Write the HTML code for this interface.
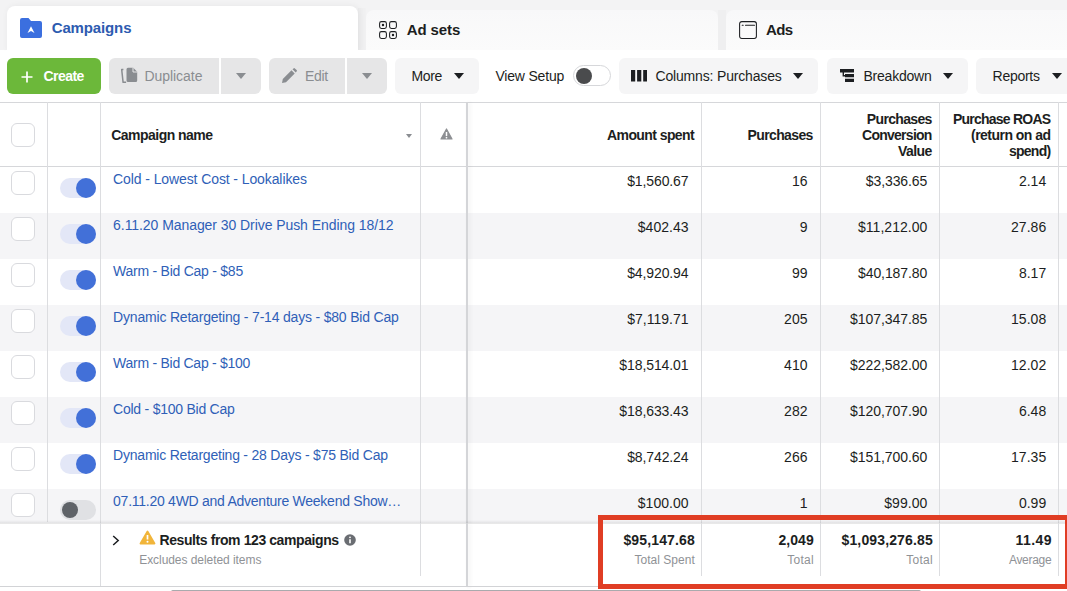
<!DOCTYPE html>
<html><head><meta charset="utf-8"><title>Campaigns</title>
<style>
*{box-sizing:border-box;margin:0;padding:0}
html,body{width:1067px;height:591px;overflow:hidden;background:#fff}
body{font-family:"Liberation Sans",Arial,sans-serif;font-size:14px;color:#1c1e21;position:relative}
.abs{position:absolute}
.t{position:absolute;white-space:nowrap;line-height:20px;z-index:5}
#tabs{position:absolute;left:0;top:0;width:1067px;height:50px;background:#f3f3f4}
.tab{position:absolute;top:10px;height:40px;background:linear-gradient(#f8f8f9,#fbfbfb);border-radius:8px 8px 0 0}
.tab.act{background:#fff;top:6px;height:46px;box-shadow:1px 0 6px rgba(0,0,0,.06)}
#bar{position:absolute;left:0;top:50px;width:1067px;height:52px;background:#fff;border-radius:8px 0 0 0}
.btn{position:absolute;top:58px;height:36px;border-radius:6px;background:#f5f5f6}
.btn.dis{background:#e6e6e7}
.btn.grn{background:#6cb83a}
.caret{position:absolute;width:0;height:0;border-left:5.700px solid transparent;border-right:5.700px solid transparent;border-top:6.200px solid #1c1e21}
.dis .caret{border-top-color:#8a8d91}
#tbl{position:absolute;left:0;top:102px;width:1067px;height:489px;background:#fff}
.hl{position:absolute;left:0;width:1067px;height:1px;background:#d6d7da}
.vl{position:absolute;width:1px;background:#dcdde0}
.vl.fz{width:2px;background:#d4d5d8;box-shadow:2px 0 4px rgba(0,0,0,.07)}
.row{position:absolute;left:0;width:1067px;height:46px;background:#fff}
.row.alt{background:#f5f5f7}
.cb{position:absolute;left:11px;width:24px;height:24px;border:1px solid #d9dade;border-radius:6px;background:#fff}
.row .cb{top:4px}
.tg{position:absolute;left:60px;top:11px;width:36px;height:20px;border-radius:10px;background:#e3e7f7}
.tg i{position:absolute;top:0;right:0;width:20px;height:20px;border-radius:50%;background:#4270d8}
.tg.off{background:#e0e1e4}
.tg.off i{right:auto;left:1.700px;top:2px;width:16px;height:16px;background:#5f6368}
#foot{position:absolute;left:0;top:522.500px;width:1067px;height:64.500px;background:#fff}
</style></head><body>

<div id="tabs">
  <div class="abs" style="left:358px;top:8px;width:8px;height:42px;background:linear-gradient(90deg,#ededee,#f1f1f2)"></div>
  <div class="abs" style="left:718px;top:10px;width:8px;height:40px;background:#efeff0"></div>
  <div class="tab act" style="left:7px;width:351px">
    <svg class="abs" style="left:13px;top:12px" width="22" height="20" viewBox="0 0 22 20"><path d="M0 2a2 2 0 0 1 2-2h6.500l2.500 3H20a2 2 0 0 1 2 2v13a2 2 0 0 1-2 2H2a2 2 0 0 1-2-2z" fill="#3b6fdf"/><path d="M11 8.300l3.500 6.800-3.500-2.100-3.500 2.100z" fill="#fff"/></svg>
  </div>
  <div class="tab" style="left:366px;width:352px">
    <svg class="abs" style="left:13px;top:11px" width="18" height="18" viewBox="0 0 18 18" fill="none" stroke="#1c1e21" stroke-width="1.050"><rect x=".6" y=".6" width="6.800" height="6.800" rx="1.800"/><rect x="10.600" y=".6" width="6.800" height="6.800" rx="1.800"/><rect x=".6" y="10.600" width="6.800" height="6.800" rx="1.800"/><rect x="10.600" y="10.600" width="6.800" height="6.800" rx="1.800"/><circle cx="4" cy="4" r=".7" fill="#1c1e21"/><circle cx="14" cy="14" r=".7" fill="#1c1e21"/></svg>
  </div>
  <div class="tab" style="left:726px;width:360px">
    <svg class="abs" style="left:13px;top:11px" width="18" height="18" viewBox="0 0 18 18" fill="none" stroke="#1c1e21" stroke-width="1.050"><rect x=".6" y=".6" width="16.800" height="16.800" rx="2.200"/><path d="M3.200 4.300h1M6.500 4.300h9" stroke-linecap="round"/></svg>
  </div>
</div>

<div id="bar"></div>
<div class="btn grn" style="left:7px;width:94px"><svg class="abs" style="left:14px;top:12.500px" width="12" height="12" viewBox="0 0 12 12"><path d="M6 .5v11M.5 6h11" stroke="#fff" stroke-width="1.700" fill="none"/></svg></div>
<div class="btn dis" style="left:109px;width:110px;border-radius:6px 0 0 6px"><svg class="abs" style="left:10.900px;top:9px" width="18" height="17" viewBox="0 0 18 17"><path d="M8 .8h5.200l4 4V13.500a1.500 1.500 0 0 1-1.500 1.500H8A1.500 1.500 0 0 1 6.500 13.500V2.300A1.500 1.500 0 0 1 8 .800z" fill="#8a8d91"/><path d="M13 .6v4.400h4.400" fill="none" stroke="#e6e6e7" stroke-width="1"/><path d="M3.400 2.600H1.700L3.100 15.300h3" stroke="#8a8d91" stroke-width="1.500" fill="none" stroke-linejoin="round"/></svg></div>
<div class="btn dis" style="left:221px;width:40px;border-radius:0 6px 6px 0"><i class="caret" style="left:14.500px;top:15px"></i></div>
<div class="btn dis" style="left:269px;width:76px;border-radius:6px 0 0 6px"><svg class="abs" style="left:12.300px;top:9.800px" width="16" height="16" viewBox="0 0 16 16"><path d="M1 15l.8-4L10.500 2.300l3.200 3.200L5 14.200zM11.500 1.300l1-.9a1 1 0 0 1 1.400 0l1.700 1.700a1 1 0 0 1 0 1.400l-.9 1z" fill="#8a8d91"/></svg></div>
<div class="btn dis" style="left:347px;width:40px;border-radius:0 6px 6px 0"><i class="caret" style="left:14.500px;top:15px"></i></div>
<div class="btn" style="left:395px;width:84px"><i class="caret" style="left:58.700px;top:15px"></i></div>
<div class="abs" style="left:573px;top:65px;width:38px;height:21px;border-radius:11px;border:1px solid #d6d7da;background:#fff"><div class="abs" style="left:2px;top:1.500px;width:16.400px;height:16.400px;border-radius:50%;background:#4a4b4d"></div></div>
<div class="btn" style="left:619px;width:199px"><svg class="abs" style="left:12px;top:12.300px" width="16.400" height="11.500" viewBox="0 0 16.400 11.500"><path d="M0 0h4.200v11.500H0zM6.100 0h4.200v11.500H6.100zM12.200 0h4.200v11.500h-4.200z" fill="#1c1e21"/></svg><i class="caret" style="left:174.300px;top:15px"></i></div>
<div class="btn" style="left:827px;width:141px"><svg class="abs" style="left:13px;top:11.300px" width="14" height="13.200" viewBox="0 0 14 13.200"><path d="M0 0h14v3.400H0zM5 4.900h9v3.400H5zM5 9.800h9v3.400H5zM2.600 3.400h1.400v2.600h1v1.400H2.600z" fill="#1c1e21"/></svg><i class="caret" style="left:116.200px;top:15px"></i></div>
<div class="btn" style="left:976px;width:120px"><i class="caret" style="left:75.600px;top:15px"></i></div>

<div id="tbl"></div>
<!-- header -->
<div class="hl" style="top:102px"></div>
<span class="cb" style="top:123px"></span>
<i class="caret" style="left:405.700px;top:134px;border-left-width:3.300px;border-right-width:3.300px;border-top-width:4px;border-top-color:#8a8d91"></i>
<svg class="abs" style="left:439.500px;top:127.500px" width="13" height="12" viewBox="0 0 13 12"><path d="M6.500 1L12 11H1z" fill="#8d8f93" stroke="#8d8f93" stroke-width="1.200" stroke-linejoin="round"/><path d="M6.500 4v4" stroke="#fff" stroke-width="1.500"/><circle cx="6.500" cy="9.700" r=".85" fill="#fff"/></svg>
<div class="hl" style="top:166px"></div>

<div class="row" style="top:167px"><span class="cb"></span><span class="tg on"><i></i></span></div>
<div class="row alt" style="top:213px"><span class="cb"></span><span class="tg on"><i></i></span></div>
<div class="row" style="top:259px"><span class="cb"></span><span class="tg on"><i></i></span></div>
<div class="row alt" style="top:305px"><span class="cb"></span><span class="tg on"><i></i></span></div>
<div class="row" style="top:351px"><span class="cb"></span><span class="tg on"><i></i></span></div>
<div class="row alt" style="top:397px"><span class="cb"></span><span class="tg on"><i></i></span></div>
<div class="row" style="top:443px"><span class="cb"></span><span class="tg on"><i></i></span></div>
<div class="row alt" style="top:489px"><span class="cb"></span><span class="tg off"><i></i></span></div>

<!-- vertical lines -->
<div class="vl" style="left:47px;top:102px;height:420px"></div>
<div class="vl" style="left:100px;top:102px;height:485px"></div>
<div class="vl" style="left:420px;top:102px;height:474px"></div>
<div class="vl fz" style="left:465.500px;top:102px;height:485px"></div>
<div class="vl" style="left:701px;top:102px;height:474px"></div>
<div class="vl" style="left:820px;top:102px;height:474px"></div>
<div class="vl" style="left:939px;top:102px;height:474px"></div>
<div class="vl" style="left:1058px;top:102px;height:474px"></div>

<!-- footer -->
<div id="foot">
  <div class="abs" style="left:0;top:-3px;width:1067px;height:4.500px;background:linear-gradient(rgba(0,0,0,0),rgba(0,0,0,.10))"></div>
  <svg class="abs" style="left:112.300px;top:12.500px" width="8" height="11" viewBox="0 0 8 11"><path d="M1.200 1l5 4.500-5 4.500" stroke="#1c1e21" stroke-width="1.500" fill="none"/></svg>
  <svg class="abs" style="left:138.500px;top:7px" width="17" height="15" viewBox="0 0 17 15"><path d="M8.500 1.500L15.500 13.500H1.500z" fill="#f1b53a" stroke="#f1b53a" stroke-width="1.800" stroke-linejoin="round"/><path d="M8.500 5v4.500" stroke="#fff" stroke-width="1.700"/><circle cx="8.500" cy="11.700" r="1" fill="#fff"/></svg>
  <svg class="abs" style="left:344.200px;top:11.700px" width="12" height="12" viewBox="0 0 12 12"><circle cx="6" cy="6" r="5.800" fill="#6a6d72"/><path d="M6 5.200v4" stroke="#fff" stroke-width="1.600"/><circle cx="6" cy="3.300" r=".9" fill="#fff"/></svg>
</div>
<div class="vl" style="left:100px;top:523px;height:64px"></div>
<div class="vl" style="left:420px;top:523px;height:53px"></div>
<div class="vl fz" style="left:465.500px;top:523px;height:64px"></div>
<div class="vl" style="left:701px;top:523px;height:53px"></div>
<div class="vl" style="left:820px;top:523px;height:53px"></div>
<div class="vl" style="left:939px;top:523px;height:53px"></div>
<div class="vl" style="left:1058px;top:523px;height:53px"></div>
<div class="hl" style="top:586px;background:#d2d3d6"></div>
<div class="abs" style="left:170.500px;top:589.600px;width:750px;height:4px;background:#a9aaad;border-radius:2px"></div>
<span class="t" style="left:51.70px;top:17.90px;font-size:15px;font-weight:bold;color:#2d5bb0;letter-spacing:-0.132px">Campaigns</span>
<span class="t" style="left:406.80px;top:19.50px;font-size:15px;font-weight:bold;color:#1c1e21;letter-spacing:-0.115px">Ad sets</span>
<span class="t" style="left:766.00px;top:19.50px;font-size:15px;font-weight:bold;color:#1c1e21;letter-spacing:-0.572px">Ads</span>
<span class="t" style="left:43.50px;top:66.15px;font-size:14px;font-weight:bold;color:#fff;letter-spacing:-0.559px">Create</span>
<span class="t" style="left:144.40px;top:66.15px;font-size:14px;font-weight:normal;color:#8a8d91;letter-spacing:-0.034px">Duplicate</span>
<span class="t" style="left:305.00px;top:66.15px;font-size:14px;font-weight:normal;color:#8a8d91;letter-spacing:-0.308px">Edit</span>
<span class="t" style="left:411.40px;top:66.15px;font-size:14px;font-weight:normal;color:#1c1e21;letter-spacing:-0.335px">More</span>
<span class="t" style="left:495.40px;top:66.15px;font-size:14px;font-weight:normal;color:#1c1e21;letter-spacing:-0.186px">View Setup</span>
<span class="t" style="left:655.50px;top:66.15px;font-size:14px;font-weight:normal;color:#1c1e21;letter-spacing:-0.169px">Columns: Purchases</span>
<span class="t" style="left:863.50px;top:66.15px;font-size:14px;font-weight:normal;color:#1c1e21;letter-spacing:-0.231px">Breakdown</span>
<span class="t" style="left:992.60px;top:66.15px;font-size:14px;font-weight:normal;color:#1c1e21;letter-spacing:-0.272px">Reports</span>
<span class="t" style="left:111.30px;top:125.45px;font-size:14px;font-weight:bold;color:#1c1e21;letter-spacing:-0.537px">Campaign name</span>
<span class="t" style="left:607.00px;top:125.45px;font-size:14px;font-weight:bold;color:#1c1e21;letter-spacing:-0.583px">Amount spent</span>
<span class="t" style="left:747.50px;top:125.45px;font-size:14px;font-weight:bold;color:#1c1e21;letter-spacing:-0.616px">Purchases</span>
<span class="t" style="left:866.80px;top:109.05px;font-size:14px;font-weight:bold;color:#1c1e21;letter-spacing:-0.654px">Purchases</span>
<span class="t" style="left:862.00px;top:125.25px;font-size:14px;font-weight:bold;color:#1c1e21;letter-spacing:-0.735px">Conversion</span>
<span class="t" style="left:898.00px;top:141.45px;font-size:14px;font-weight:bold;color:#1c1e21;letter-spacing:-0.548px">Value</span>
<span class="t" style="left:953.00px;top:109.05px;font-size:14px;font-weight:bold;color:#1c1e21;letter-spacing:-0.773px">Purchase ROAS</span>
<span class="t" style="left:971.00px;top:125.25px;font-size:14px;font-weight:bold;color:#1c1e21;letter-spacing:-0.520px">(return on ad</span>
<span class="t" style="left:1009.00px;top:141.45px;font-size:14px;font-weight:bold;color:#1c1e21;letter-spacing:-0.758px">spend)</span>
<span class="t" style="left:113.10px;top:168.95px;font-size:14px;font-weight:normal;color:#2f5fb7;letter-spacing:-0.099px">Cold - Lowest Cost - Lookalikes</span>
<span class="t" style="left:627.13px;top:170.85px;font-size:14px;font-weight:normal;color:#1c1e21;letter-spacing:-0.103px">$1,560.67</span>
<span class="t" style="left:791.88px;top:170.85px;font-size:14px;font-weight:normal;color:#1c1e21;letter-spacing:0.142px">16</span>
<span class="t" style="left:865.83px;top:170.85px;font-size:14px;font-weight:normal;color:#1c1e21;letter-spacing:-0.103px">$3,336.65</span>
<span class="t" style="left:1018.92px;top:170.85px;font-size:14px;font-weight:normal;color:#1c1e21;letter-spacing:0.010px">2.14</span>
<span class="t" style="left:113.10px;top:214.95px;font-size:14px;font-weight:normal;color:#2f5fb7;letter-spacing:-0.065px">6.11.20 Manager 30 Drive Push Ending 18/12</span>
<span class="t" style="left:637.74px;top:216.85px;font-size:14px;font-weight:normal;color:#1c1e21;letter-spacing:0.042px">$402.43</span>
<span class="t" style="left:799.74px;top:216.85px;font-size:14px;font-weight:normal;color:#1c1e21;letter-spacing:0.063px">9</span>
<span class="t" style="left:857.97px;top:216.85px;font-size:14px;font-weight:normal;color:#1c1e21;letter-spacing:0.033px">$11,212.00</span>
<span class="t" style="left:1011.06px;top:216.85px;font-size:14px;font-weight:normal;color:#1c1e21;letter-spacing:0.023px">27.86</span>
<span class="t" style="left:113.10px;top:260.95px;font-size:14px;font-weight:normal;color:#2f5fb7;letter-spacing:-0.250px">Warm - Bid Cap - $85</span>
<span class="t" style="left:627.13px;top:262.85px;font-size:14px;font-weight:normal;color:#1c1e21;letter-spacing:-0.103px">$4,920.94</span>
<span class="t" style="left:791.88px;top:262.85px;font-size:14px;font-weight:normal;color:#1c1e21;letter-spacing:0.142px">99</span>
<span class="t" style="left:857.97px;top:262.85px;font-size:14px;font-weight:normal;color:#1c1e21;letter-spacing:-0.083px">$40,187.80</span>
<span class="t" style="left:1018.92px;top:262.85px;font-size:14px;font-weight:normal;color:#1c1e21;letter-spacing:0.010px">8.17</span>
<span class="t" style="left:113.10px;top:306.95px;font-size:14px;font-weight:normal;color:#2f5fb7;letter-spacing:-0.192px">Dynamic Retargeting - 7-14 days - $80 Bid Cap</span>
<span class="t" style="left:627.13px;top:308.85px;font-size:14px;font-weight:normal;color:#1c1e21;letter-spacing:0.028px">$7,119.71</span>
<span class="t" style="left:784.02px;top:308.85px;font-size:14px;font-weight:normal;color:#1c1e21;letter-spacing:0.110px">205</span>
<span class="t" style="left:850.11px;top:308.85px;font-size:14px;font-weight:normal;color:#1c1e21;letter-spacing:-0.067px">$107,347.85</span>
<span class="t" style="left:1011.06px;top:308.85px;font-size:14px;font-weight:normal;color:#1c1e21;letter-spacing:0.023px">15.08</span>
<span class="t" style="left:113.10px;top:352.95px;font-size:14px;font-weight:normal;color:#2f5fb7;letter-spacing:-0.267px">Warm - Bid Cap - $100</span>
<span class="t" style="left:619.27px;top:354.85px;font-size:14px;font-weight:normal;color:#1c1e21;letter-spacing:-0.083px">$18,514.01</span>
<span class="t" style="left:784.02px;top:354.85px;font-size:14px;font-weight:normal;color:#1c1e21;letter-spacing:0.110px">410</span>
<span class="t" style="left:850.11px;top:354.85px;font-size:14px;font-weight:normal;color:#1c1e21;letter-spacing:-0.067px">$222,582.00</span>
<span class="t" style="left:1011.06px;top:354.85px;font-size:14px;font-weight:normal;color:#1c1e21;letter-spacing:0.023px">12.02</span>
<span class="t" style="left:113.10px;top:398.95px;font-size:14px;font-weight:normal;color:#2f5fb7;letter-spacing:-0.243px">Cold - $100 Bid Cap</span>
<span class="t" style="left:619.27px;top:400.85px;font-size:14px;font-weight:normal;color:#1c1e21;letter-spacing:-0.083px">$18,633.43</span>
<span class="t" style="left:784.02px;top:400.85px;font-size:14px;font-weight:normal;color:#1c1e21;letter-spacing:0.110px">282</span>
<span class="t" style="left:850.11px;top:400.85px;font-size:14px;font-weight:normal;color:#1c1e21;letter-spacing:-0.067px">$120,707.90</span>
<span class="t" style="left:1018.92px;top:400.85px;font-size:14px;font-weight:normal;color:#1c1e21;letter-spacing:0.010px">6.48</span>
<span class="t" style="left:113.10px;top:444.95px;font-size:14px;font-weight:normal;color:#2f5fb7;letter-spacing:-0.217px">Dynamic Retargeting - 28 Days - $75 Bid Cap</span>
<span class="t" style="left:627.13px;top:446.85px;font-size:14px;font-weight:normal;color:#1c1e21;letter-spacing:-0.103px">$8,742.24</span>
<span class="t" style="left:784.02px;top:446.85px;font-size:14px;font-weight:normal;color:#1c1e21;letter-spacing:0.110px">266</span>
<span class="t" style="left:850.11px;top:446.85px;font-size:14px;font-weight:normal;color:#1c1e21;letter-spacing:-0.067px">$151,700.60</span>
<span class="t" style="left:1011.06px;top:446.85px;font-size:14px;font-weight:normal;color:#1c1e21;letter-spacing:0.023px">17.35</span>
<span class="t" style="left:113.10px;top:490.95px;font-size:14px;font-weight:normal;color:#2f5fb7;letter-spacing:-0.260px">07.11.20 4WD and Adventure Weekend Show…</span>
<span class="t" style="left:637.74px;top:492.85px;font-size:14px;font-weight:normal;color:#1c1e21;letter-spacing:0.042px">$100.00</span>
<span class="t" style="left:799.74px;top:492.85px;font-size:14px;font-weight:normal;color:#1c1e21;letter-spacing:0.063px">1</span>
<span class="t" style="left:884.30px;top:492.85px;font-size:14px;font-weight:normal;color:#1c1e21;letter-spacing:0.034px">$99.00</span>
<span class="t" style="left:1018.92px;top:492.85px;font-size:14px;font-weight:normal;color:#1c1e21;letter-spacing:0.010px">0.99</span>
<span class="t" style="left:159.50px;top:530.05px;font-size:14px;font-weight:bold;color:#1c1e21;letter-spacing:-0.410px">Results from 123 campaigns</span>
<span class="t" style="left:139.20px;top:550.14px;font-size:12px;font-weight:normal;color:#8f9296;letter-spacing:-0.057px">Excludes deleted items</span>
<span class="t" style="left:623.40px;top:530.35px;font-size:14px;font-weight:bold;color:#1c1e21;letter-spacing:0.147px">$95,147.68</span>
<span class="t" style="left:634.40px;top:550.14px;font-size:12px;font-weight:normal;color:#8f9296;letter-spacing:0.035px">Total Spent</span>
<span class="t" style="left:778.50px;top:530.35px;font-size:14px;font-weight:bold;color:#1c1e21;letter-spacing:0.038px">2,049</span>
<span class="t" style="left:787.30px;top:550.14px;font-size:12px;font-weight:normal;color:#8f9296;letter-spacing:0.260px">Total</span>
<span class="t" style="left:841.50px;top:530.35px;font-size:14px;font-weight:bold;color:#1c1e21;letter-spacing:0.139px">$1,093,276.85</span>
<span class="t" style="left:906.30px;top:550.14px;font-size:12px;font-weight:normal;color:#8f9296;letter-spacing:0.260px">Total</span>
<span class="t" style="left:1015.50px;top:530.35px;font-size:14px;font-weight:bold;color:#1c1e21;letter-spacing:0.459px">11.49</span>
<span class="t" style="left:1008.90px;top:550.14px;font-size:12px;font-weight:normal;color:#8f9296;letter-spacing:-0.297px">Average</span>
<!-- red highlight -->
<div class="abs" style="left:598px;top:515.200px;width:472px;height:73.500px;border:5px solid #e03d24;z-index:9"></div>
</body></html>
